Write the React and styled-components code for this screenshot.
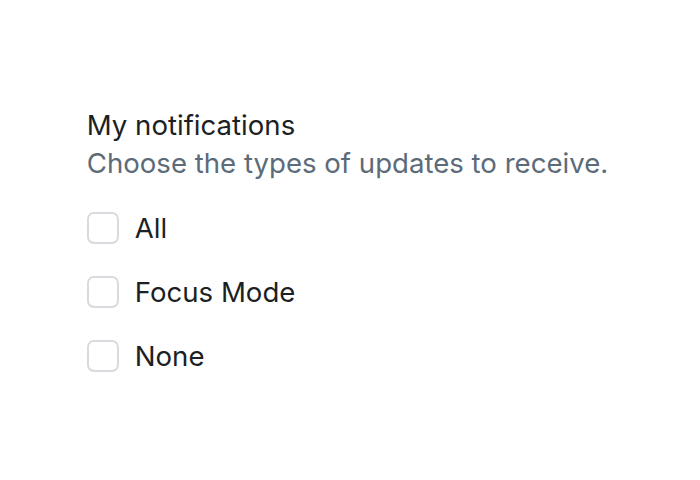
import React from "react";
import styled, { createGlobalStyle } from "styled-components";

const GlobalStyle = createGlobalStyle`
  html, body {
    margin: 0;
    padding: 0;
    background: #ffffff;
  }
  body {
    font-family: Inter, "Noto Sans", sans-serif;
  }
`;

const Page = styled.div`
  width: 700px;
  height: 480px;
  box-sizing: border-box;
  padding: 0 5px 3px 0;
  display: flex;
  align-items: center;
  justify-content: center;
`;

const Fieldset = styled.fieldset`
  border: none;
  margin: 0;
  padding: 0;
  display: flex;
  flex-direction: column;
`;

const Legend = styled.div`
  font-size: 27.6px;
  line-height: 38px;
  color: #1c1f23;
`;

const Description = styled.div`
  font-size: 27.6px;
  line-height: 38px;
  color: #5c6b79;
  margin-bottom: 30px;
`;

const Options = styled.div`
  display: flex;
  flex-direction: column;
  gap: 32px;
`;

const Option = styled.label`
  display: flex;
  align-items: center;
  gap: 16px;
  font-size: 27.6px;
  line-height: 32px;
  color: #1c1f23;
  cursor: pointer;
`;

const Box = styled.span`
  width: 32px;
  height: 32px;
  box-sizing: border-box;
  border: 2px solid #d7dbe0;
  border-radius: 7px;
  background: #ffffff;
  flex-shrink: 0;
`;

const options = ["All", "Focus Mode", "None"];

export default function App() {
  return (
    <>
      <GlobalStyle />
      <Page>
        <Fieldset>
          <Legend>My notifications</Legend>
          <Description>Choose the types of updates to receive.</Description>
          <Options>
            {options.map((o) => (
              <Option key={o}>
                <Box />
                {o}
              </Option>
            ))}
          </Options>
        </Fieldset>
      </Page>
    </>
  );
}
